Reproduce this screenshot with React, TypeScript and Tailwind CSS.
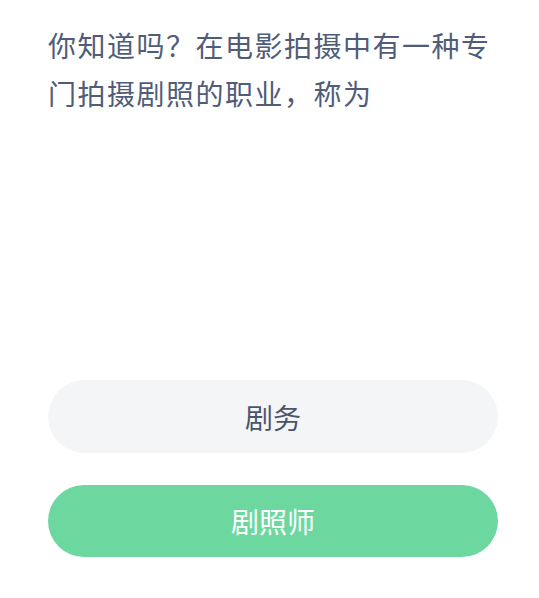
export default function App() {
  const font = { fontFamily: '"Noto Sans CJK SC", "Noto Sans", sans-serif' }
  return (
    <div className="w-[539px] h-[598px] bg-white pt-[21px] pl-[48px] pr-[41px]" style={font}>
      <p className="text-[28px] leading-[48px] tracking-[1.5px] text-[#505c78]">
        你知道吗？在电影拍摄中有一种专门拍摄剧照的职业，称为
      </p>
      <div className="h-[263px]" />
      <div className="flex flex-col gap-[32px]">
        <button className="h-[73px] w-full rounded-full bg-[#f4f5f7] text-[28px] text-[#4a556c]">
          剧务
        </button>
        <button className="h-[72px] w-full rounded-full bg-[#6dd7a0] text-[28px] text-white">
          剧照师
        </button>
      </div>
    </div>
  )
}
